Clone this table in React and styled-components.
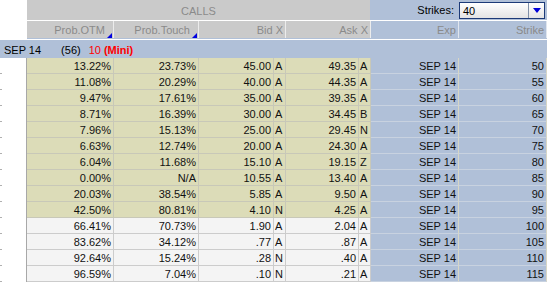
import React from 'react'
import styled, { createGlobalStyle, css } from 'styled-components'

const BLUE = '#b0c0d8'
const GRAY = '#cacaca'
const BEIGE = '#dcdcb8'
const LIGHT = '#f4f4f4'

const GlobalStyle = createGlobalStyle`
  body {
    margin: 0;
    background: #fff;
    font-family: "Liberation Sans", Arial, sans-serif;
    font-size: 11px;
  }
`

// column widths: gutter, otm, touch, bid, bidX, ask, askX, exp, strike
const W = [27, 87, 85, 75, 12, 73, 12, 88, 88]

const rows = [
  ['13.22%', '23.73%', '45.00', 'A', '49.35', 'A', 50, true],
  ['11.08%', '20.29%', '40.00', 'A', '44.35', 'A', 55, true],
  ['9.47%', '17.61%', '35.00', 'A', '39.35', 'A', 60, true],
  ['8.71%', '16.39%', '30.00', 'A', '34.45', 'B', 65, true],
  ['7.96%', '15.13%', '25.00', 'A', '29.45', 'N', 70, true],
  ['6.63%', '12.74%', '20.00', 'A', '24.30', 'A', 75, true],
  ['6.04%', '11.68%', '15.10', 'A', '19.15', 'Z', 80, true],
  ['0.00%', 'N/A', '10.55', 'A', '13.40', 'A', 85, true],
  ['20.03%', '38.54%', '5.85', 'A', '9.50', 'A', 90, true],
  ['42.50%', '80.81%', '4.10', 'N', '4.25', 'A', 95, true],
  ['66.41%', '70.73%', '1.90', 'A', '2.04', 'A', 100, false],
  ['83.62%', '34.12%', '.77', 'A', '.87', 'A', 105, false],
  ['92.64%', '15.24%', '.28', 'N', '.40', 'A', 110, false],
  ['96.59%', '7.04%', '.10', 'N', '.21', 'A', 115, false],
]

const Chain = styled.div`
  width: 547px;
  background: ${BLUE};
  overflow: hidden;
`

const TopBar = styled.div`
  display: flex;
  height: 20px;
  border-bottom: 1px solid #fff;
`

const Gutter = styled.div`
  width: ${W[0]}px;
  flex: none;
  background: #fff;
  box-sizing: border-box;
  position: relative;
  ${p => p.$data && css`
    border-right: 1px solid #a8a8a8;
    &::after {
      content: '';
      position: absolute;
      left: 0;
      bottom: 0;
      width: 2px;
      height: 1px;
      background: #b0b0b0;
    }
  `}
`

const CallsTitle = styled.div`
  width: 343px;
  background: ${GRAY};
  color: #8a8a8a;
  font-size: 11px;
  display: flex;
  align-items: center;
  justify-content: center;
  padding-top: 1px;
  box-sizing: border-box;
`

const StrikesArea = styled.div`
  flex: 1;
  display: flex;
  align-items: center;
  justify-content: flex-end;
  gap: 5px;
  padding-right: 2px;
  color: #000;
`

const Select = styled.div`
  width: 86px;
  height: 17px;
  box-sizing: border-box;
  border: 1px solid #1c3a78;
  background: linear-gradient(#ffffff, #e4e4e4);
  display: flex;
  align-items: center;
  margin-top: 1px;
`

const SelectValue = styled.span`
  flex: 1;
  padding-left: 3px;
  color: #000;
`

const SelectButton = styled.span`
  width: 15px;
  height: 100%;
  border-left: 1px solid #8090a8;
  display: flex;
  align-items: center;
  justify-content: center;
  &::before {
    content: '';
    border-left: 4px solid transparent;
    border-right: 4px solid transparent;
    border-top: 5px solid #0000d8;
  }
`

const LabelRow = styled.div`
  display: flex;
  height: 18px;
  border-bottom: 1px solid #fff;
`

const Label = styled.div`
  width: ${p => p.$w}px;
  flex: none;
  height: 17px;
  box-sizing: border-box;
  background: ${p => (p.$blue ? BLUE : GRAY)};
  border-right: 1px solid ${p => (p.$blue ? '#e0e6ee' : '#ececec')};
  color: #8a8a8a;
  text-align: right;
  padding-right: ${p => (p.$sort ? 8 : 2)}px;
  line-height: 18px;
  position: relative;
  ${p => p.$sort && css`
    &::after {
      content: '';
      position: absolute;
      right: 1px;
      bottom: 0;
      border-left: 5px solid transparent;
      border-bottom: 5px solid #0000e0;
    }
  `}
`

const ExpiryRow = styled.div`
  display: flex;
  align-items: center;
  height: 18px;
  box-sizing: border-box;
  padding: 2px 0 0 4px;
  color: #000;
`

const Count = styled.span`
  margin-left: 20px;
`

const Mini = styled.span`
  margin-left: 8px;
  color: #ff0000;
  b {
    margin-left: 3px;
  }
`

const Row = styled.div`
  display: flex;
  height: 16px;
`

const Cell = styled.div`
  width: ${p => p.$w}px;
  flex: none;
  box-sizing: border-box;
  line-height: 16px;
  color: #111;
  white-space: nowrap;
  text-align: ${p => (p.$left ? 'left' : 'right')};
  padding: ${p => (p.$left ? '0 0 0 1px' : '0 2px 0 0')};
  ${p => {
    if (p.$tone === 'blue') return css`
      background: ${BLUE};
      border-right: 1px solid #d8d6c4;
      border-bottom: 1px solid #c8d2e0;
    `
    if (p.$tone === 'itm') return css`
      background: ${BEIGE};
      border-right: 1px solid #c8c8b8;
      border-bottom: 1px solid #c8c8b8;
    `
    return css`
      background: ${LIGHT};
      border-right: 1px solid #cccccc;
      border-bottom: 1px solid #cccccc;
    `
  }}
`

function App() {
  return (
    <>
      <GlobalStyle />
      <Chain>
        <TopBar>
          <Gutter />
          <CallsTitle>CALLS</CallsTitle>
          <StrikesArea>
            Strikes:
            <Select>
              <SelectValue>40</SelectValue>
              <SelectButton />
            </Select>
          </StrikesArea>
        </TopBar>

        <LabelRow>
          <Gutter />
          <Label $w={W[1]} $sort>Prob.OTM</Label>
          <Label $w={W[2]} $sort>Prob.Touch</Label>
          <Label $w={W[3] + W[4]}>Bid X</Label>
          <Label $w={W[5] + W[6]}>Ask X</Label>
          <Label $w={W[7]} $blue>Exp</Label>
          <Label $w={W[8]} $blue>Strike</Label>
        </LabelRow>

        <ExpiryRow>
          SEP 14
          <Count>(56)</Count>
          <Mini>10<b>(Mini)</b></Mini>
        </ExpiryRow>

        {rows.map(([otm, touch, bid, bx, ask, ax, strike, itm]) => {
          const tone = itm ? 'itm' : 'otm'
          return (
            <Row key={strike}>
              <Gutter $data />
              <Cell $w={W[1]} $tone={tone}>{otm}</Cell>
              <Cell $w={W[2]} $tone={tone}>{touch}</Cell>
              <Cell $w={W[3]} $tone={tone}>{bid}</Cell>
              <Cell $w={W[4]} $tone={tone} $left>{bx}</Cell>
              <Cell $w={W[5]} $tone={tone}>{ask}</Cell>
              <Cell $w={W[6]} $tone={tone} $left>{ax}</Cell>
              <Cell $w={W[7]} $tone="blue">SEP 14</Cell>
              <Cell $w={W[8]} $tone="blue">{strike}</Cell>
            </Row>
          )
        })}
      </Chain>
    </>
  )
}

export default App
